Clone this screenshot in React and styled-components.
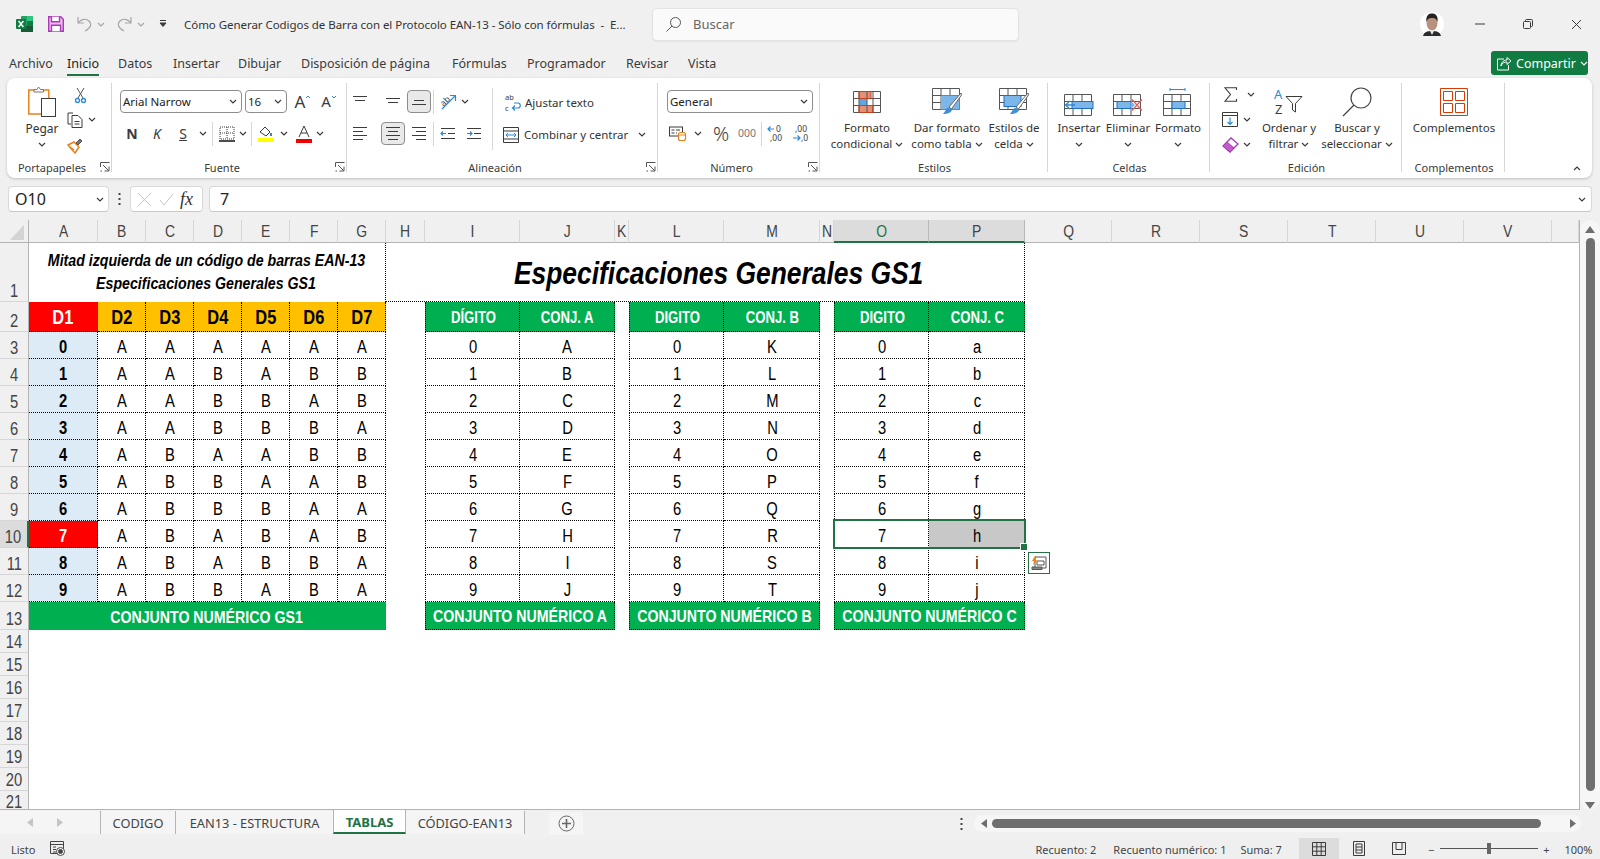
import React from "react";
import styled, { createGlobalStyle } from "styled-components";

const UI = `"Noto Sans", "Open Sans", sans-serif`;
const NARROW = `"Liberation Sans", Arial, sans-serif`;
const INK = "#3b3b3b";
const BLUE = "#2b88d8";
const ORANGE = "#e8801a";
const GREEN = "#217346";

const GlobalStyle = createGlobalStyle`
  html, body { margin: 0; padding: 0; background: #f0f0f0; overflow: hidden; }
  * { box-sizing: border-box; }
  svg { overflow: visible; }
`;

const Page = styled.div`
  width: 1600px;
  height: 859px;
  display: flex;
  flex-direction: column;
  background: #f0f0f0;
  font-family: ${UI};
  color: ${INK};
  overflow: hidden;
`;

/* Arial Narrow is not installed, so Arial widths are squeezed to match */
const Narrow = styled.span`
  display: inline-block;
  flex: none;
  white-space: nowrap;
  transform: scaleX(0.82);
  transform-origin: center;
  margin: 0 -40px;
`;

/* ---------- title bar ---------- */
const TitleBar = styled.header`
  height: 48px;
  display: flex;
  align-items: center;
  flex: none;
`;
const QuickSlot = styled.div`
  width: ${(p) => p.$w}px;
  margin-left: ${(p) => p.$ml || 0}px;
  display: flex;
  align-items: center;
  justify-content: ${(p) => p.$justify || "center"};
  flex: none;
`;
const DocTitle = styled.div`
  width: 469px;
  font-size: 11.5px;
  letter-spacing: -0.05px;
  color: #333;
  white-space: pre;
`;
const SearchBox = styled.div`
  width: 366px;
  height: 31px;
  display: flex;
  align-items: center;
  gap: 12px;
  padding-left: 13px;
  background: #fafafa;
  border-radius: 4px;
  box-shadow: 0 0 0 1px #e3e3e3, 0 1px 2px #c9c9c9;
  font-size: 13px;
  color: #666;
`;
const WinButton = styled.div`
  width: 48px;
  display: flex;
  justify-content: center;
`;

/* ---------- ribbon tabs ---------- */
const TabRow = styled.nav`
  height: 30px;
  display: flex;
  align-items: flex-start;
  padding-left: 9px;
  flex: none;
`;
const RibbonTab = styled.div`
  width: ${(p) => p.$w}px;
  height: 27px;
  font-size: 12.5px;
  line-height: 31px;
  white-space: nowrap;
  color: ${(p) => (p.$active ? "#222" : "#3b3b3b")};
  div {
    width: 32px;
    height: 2px;
    background: ${GREEN};
    margin-top: -5px;
  }
`;
const ShareButton = styled.div`
  margin-left: auto;
  margin-right: 12px;
  margin-top: 3px;
  width: 97px;
  height: 24px;
  border-radius: 3px;
  background: #107c41;
  color: #fff;
  font-size: 12.5px;
  display: flex;
  align-items: center;
  gap: 4px;
  padding-left: 5px;
`;

/* ---------- ribbon ---------- */
const Ribbon = styled.section`
  height: 100px;
  margin: 0 8px 0 7px;
  padding: 5px 0 6px;
  background: #fff;
  border-radius: 8px;
  box-shadow: 0 1px 3px #bdbdbd;
  display: flex;
  flex: none;
`;
const Group = styled.div`
  width: ${(p) => p.$w}px;
  flex: none;
  display: flex;
  flex-direction: column;
  border-right: 1px solid #d6d6d6;
`;
const GroupBody = styled.div`
  flex: 1;
  display: flex;
  padding-left: ${(p) => p.$pl || 0}px;
  min-height: 0;
`;
const GroupFoot = styled.div`
  height: 16px;
  margin-bottom: -3px;
  display: flex;
  align-items: center;
  font-size: 11px;
  color: #3b3b3b;
  span {
    flex: 1;
    text-align: center;
    white-space: nowrap;
    padding: ${(p) => (p.$launch ? "0 3px 0 0" : "0 0 0 2px")};
  }
  svg { margin-right: 1px; }
`;
const RowStack = styled.div`
  display: flex;
  flex-direction: column;
  gap: 9px;
  padding-top: 7px;
`;
const ToolRow = styled.div`
  display: flex;
  align-items: center;
  height: 23px;
`;
const Tool = styled.div`
  width: ${(p) => p.$w}px;
  height: 23px;
  margin-left: ${(p) => p.$ml || 0}px;
  flex: none;
  display: flex;
  align-items: center;
  justify-content: center;
  border-radius: 4px;
  ${(p) => p.$on && "background: #e9e9e9; border: 1px solid #8d8d8d;"}
`;
const ToolLetter = styled.span`
  font-family: ${UI};
  font-size: ${(p) => p.$size || 14}px;
  font-weight: ${(p) => p.$weight || 400};
  font-style: ${(p) => p.$italic || "normal"};
  text-decoration: ${(p) => p.$under || "none"};
  color: ${(p) => p.$color || INK};
  line-height: 1;
`;
const VRule = styled.div`
  width: 1px;
  height: ${(p) => p.$h || 24}px;
  margin: ${(p) => p.$mt || 0}px ${(p) => p.$mx ?? 2}px 0;
  background: #d6d6d6;
  flex: none;
`;
const SelectBox = styled.div`
  width: ${(p) => p.$w}px;
  height: 23px;
  margin-right: ${(p) => p.$mr || 0}px;
  border: 1px solid #8d8d8d;
  border-radius: 4px;
  background: #fff;
  display: flex;
  align-items: center;
  justify-content: space-between;
  padding: 0 4px 0 2px;
  font-size: 11.5px;
  flex: none;
  color: #222;
`;
const BigButton = styled.div`
  width: ${(p) => p.$w}px;
  margin-left: ${(p) => p.$ml || 0}px;
  flex: none;
  display: flex;
  flex-direction: column;
  align-items: center;
  font-size: 11.5px;
  line-height: 16px;
  white-space: nowrap;
  color: #333;
`;
const BigIcon = styled.div`
  height: 37px;
  display: flex;
  align-items: center;
  justify-content: center;
`;
const BigLine = styled.div`
  height: 16px;
  display: flex;
  align-items: center;
  gap: 3px;
  font-size: ${(p) => p.$size || 11.5}px;
  padding-top: ${(p) => p.$pt || 0}px;
`;
const SmallColumn = styled.div`
  width: ${(p) => p.$w}px;
  flex: none;
  display: flex;
  flex-direction: column;
  margin-top: -1px;
`;
const SmallItem = styled.div`
  height: 25px;
  display: flex;
  align-items: center;
  gap: ${(p) => p.$gap || 6}px;
  padding-left: ${(p) => p.$pl || 0}px;
`;
const TextTool = styled.div`
  height: 23px;
  display: flex;
  align-items: center;
  font-size: 11.5px;
  color: #333;
  white-space: nowrap;
  padding-left: ${(p) => p.$pl || 0}px;
  padding-top: 2px;
  gap: ${(p) => p.$gap || 4}px;
`;
const CollapseSlot = styled.div`
  flex: 1;
  display: flex;
  align-items: flex-end;
  justify-content: flex-end;
  padding: 0 11px 1px 0;
`;

/* ---------- formula bar ---------- */
const FormulaBar = styled.div`
  height: 26px;
  margin: 8px 8px 8px 8px;
  display: flex;
  flex: none;
`;
const FieldBox = styled.div`
  width: ${(p) => p.$w || "auto"};
  flex: ${(p) => (p.$grow ? 1 : "none")};
  background: #fff;
  border: 1px solid #d9d9d9;
  border-bottom-color: #c8c8c8;
  border-radius: 4px;
  display: flex;
  align-items: center;
  justify-content: space-between;
  padding: 0 ${(p) => p.$pr || 4}px 0 ${(p) => p.$pl || 6}px;
  font-size: 16px;
  color: #222;
`;
const DotsSlot = styled.div`
  width: 21px;
  flex: none;
  display: flex;
  justify-content: center;
  align-items: center;
`;
const FormulaIcons = styled(FieldBox)`
  margin-right: 6px;
  justify-content: flex-start;
  gap: 7px;
  padding: 0 0 0 6px;
`;
const FxMark = styled.span`
  font-family: "Liberation Serif", serif;
  font-style: italic;
  font-size: 18px;
  color: #333;
  margin-left: -1px;
`;

/* ---------- sheet ---------- */
const SheetArea = styled.div`
  height: 590px;
  display: flex;
  flex: none;
`;
const Grid = styled.div`
  width: 1580px;
  height: 590px;
  overflow: hidden;
  display: grid;
  grid-template-columns: 29px 69px repeat(6, 48px) 39px 95px 95px 14px 95px 96px 14px 95px 96px 87px repeat(5, 88px) 27px;
  grid-template-rows: 23px 59px 30px repeat(10, 27px) 28px repeat(7, 23px) 18px;
  background: #fff;
  border-right: 1px solid #b4b4b4;
  border-bottom: 1px solid #b4b4b4;
`;
const Corner = styled.div`
  background: #f0f0f0;
  border-right: 1px solid #b4b4b4;
  border-bottom: 1px solid #b4b4b4;
  display: flex;
  align-items: flex-end;
  justify-content: flex-end;
  padding: 0 4px 2px 0;
`;
const ColHead = styled.div`
  grid-column: ${(p) => p.$col};
  grid-row: 1;
  display: flex;
  align-items: center;
  justify-content: center;
  overflow: hidden;
  padding: 2px 0 0 1px;
  font-family: ${NARROW};
  font-size: 17px;
  color: ${(p) => (p.$hot ? GREEN : "#444")};
  background: ${(p) => (p.$on ? "#dcdcdc" : "#f0f0f0")};
  border-right: 1px solid ${(p) => (p.$on ? "#b8b8b8" : "#d6d6d6")};
  border-bottom: ${(p) => (p.$on ? `2px solid ${GREEN}` : "1px solid #b4b4b4")};
`;
const RowHead = styled.div`
  grid-column: 1;
  grid-row: ${(p) => p.$row};
  display: flex;
  align-items: flex-end;
  justify-content: center;
  overflow: hidden;
  font-family: ${NARROW};
  font-size: 18px;
  line-height: ${(p) => (p.$last ? "13px" : "19px")};
  color: #444;
  background: ${(p) => (p.$on ? "#dcdcdc" : "#f0f0f0")};
  border-right: ${(p) => (p.$on ? `2px solid ${GREEN}` : "1px solid #b4b4b4")};
  border-bottom: ${(p) => (p.$last ? "none" : "1px solid #d6d6d6")};
`;
const Cell = styled.div`
  grid-column: ${(p) => p.$col} / span ${(p) => p.$span || 1};
  grid-row: ${(p) => p.$row};
  display: flex;
  align-items: center;
  justify-content: center;
  flex-direction: column;
  min-width: 0;
  font-family: ${NARROW};
  font-size: ${(p) => p.$size || 18}px;
  font-weight: ${(p) => (p.$bold ? 700 : 400)};
  font-style: ${(p) => (p.$italic ? "italic" : "normal")};
  line-height: ${(p) => p.$lh || "normal"};
  color: ${(p) => p.$color || "#000"};
  background: ${(p) => p.$bg || "transparent"};
  padding-left: ${(p) => p.$pl ?? 1}px;
  padding-right: ${(p) => p.$pr || 0}px;
  padding-top: ${(p) => p.$pt ?? 4}px;
  padding-bottom: ${(p) => p.$pb || 0}px;
  border-right: ${(p) => (p.$noRight ? "none" : "1px dotted #000")};
  border-bottom: ${(p) => (p.$noBottom ? "none" : "1px dotted #000")};
  border-left: ${(p) => (p.$left ? "1px dotted #000" : "none")};
`;
const SelectionFrame = styled.div`
  grid-column: 16 / span 2;
  grid-row: 11;
  margin: -2px -1px -1px -1px;
  border: 2px solid ${GREEN};
  position: relative;
  z-index: 2;
`;
const FillHandle = styled.div`
  position: absolute;
  right: -3px;
  bottom: -3px;
  width: 6px;
  height: 6px;
  background: ${GREEN};
  border: 1px solid #fff;
  box-sizing: content-box;
  margin: -1px;
`;
const QuickAnalysis = styled.div`
  grid-column: 18;
  grid-row: 12;
  width: 22px;
  height: 22px;
  margin: 4px 0 0 3px;
  border: 1px solid ${GREEN};
  background: #fff;
  display: flex;
  align-items: center;
  justify-content: center;
  z-index: 2;
`;
const VScroll = styled.div`
  width: 20px;
  height: 590px;
  display: flex;
  flex-direction: column;
  align-items: center;
  background: #f6f6f6;
  border-radius: 10px;
  padding-top: 6px;
`;
const VThumb = styled.div`
  width: 9px;
  height: 553px;
  margin: 5px 0 11px;
  background: #6e6e6e;
  border-radius: 5px;
`;

/* ---------- sheet tabs ---------- */
const SheetBar = styled.div`
  height: 28px;
  display: flex;
  align-items: flex-start;
  flex: none;
`;
const SheetNav = styled.div`
  width: 100px;
  height: 23px;
  display: flex;
  align-items: center;
  padding-left: 27px;
  gap: 22px;
  flex: none;
  background: #f5f5f5;
  margin-top: 1px;
`;
const SheetTab = styled.div`
  width: ${(p) => p.$w}px;
  height: 23px;
  margin-top: ${(p) => (p.$active ? 0 : 1)}px;
  padding-top: 1px;
  flex: none;
  display: flex;
  align-items: center;
  justify-content: center;
  font-size: ${(p) => (p.$active ? 13 : 12.8)}px;
  font-weight: ${(p) => (p.$active ? 700 : 400)};
  color: ${(p) => (p.$active ? GREEN : "#444")};
  background: ${(p) => (p.$active ? "#fff" : "#f5f5f5")};
  border-left: ${(p) => (p.$noLeft ? "none" : "1px solid #b4b4b4")};
  border-right: ${(p) => (p.$right ? "1px solid #b4b4b4" : "none")};
  ${(p) => p.$active && `height: 24px; border-bottom: 2px solid ${GREEN};`}
`;
const AddSheet = styled.div`
  width: 34px;
  margin-left: 24px;
  height: 23px;
  margin-top: 2px;
  background: #f5f5f5;
  display: flex;
  align-items: center;
  justify-content: center;
  flex: none;
`;
const HScrollWrap = styled.div`
  margin-left: auto;
  margin-right: 20px;
  width: 620px;
  height: 23px;
  display: flex;
  align-items: center;
  margin-top: 2px;
`;
const HTrack = styled.div`
  flex: 1;
  height: 17px;
  margin-left: 11px;
  background: #f6f6f6;
  border-radius: 9px;
  display: flex;
  align-items: center;
  padding: 0 5px 0 7px;
  gap: 4px;
`;
const HThumb = styled.div`
  width: 549px;
  height: 9px;
  margin-right: 24px;
  background: #6e6e6e;
  border-radius: 5px;
  flex: none;
`;

/* ---------- status bar ---------- */
const StatusBar = styled.footer`
  height: 21px;
  display: flex;
  align-items: center;
  font-size: 11px;
  color: #444;
  flex: none;
  background: #efefef;
`;
const StatusText = styled.span`
  margin-left: ${(p) => p.$ml || 0}px;
  padding-top: 2px;
  white-space: nowrap;
  flex: none;
`;
const StatusIcons = styled.div`
  margin-left: ${(p) => p.$ml || 0}px;
  display: flex;
  flex: none;
`;
const ViewButton = styled.div`
  width: 40px;
  height: 21px;
  display: flex;
  align-items: center;
  justify-content: center;
  background: ${(p) => (p.$on ? "#dcdcdc" : "transparent")};
  flex: none;
`;
const ZoomTrack = styled.div`
  width: 98px;
  height: 1px;
  background: #555;
  margin: 0 5px 0 6px;
  display: flex;
  justify-content: center;
  align-items: center;
  flex: none;
  div { width: 4px; height: 11px; background: #666; }
`;

/* ---------- icons ---------- */
const Ic = ({ w, h, vb, children, ...rest }) => (
  <svg width={w} height={h} viewBox={vb || `0 0 ${w} ${h}`} fill="none" stroke={INK} strokeWidth="1" {...rest}>
    {children}
  </svg>
);
const Chevron = ({ color = INK, up }) => (
  <Ic w={8} h={5} stroke={color} strokeWidth="1.2">
    <path d={up ? "M1 4l3-3 3 3" : "M1 1l3 3 3-3"} />
  </Ic>
);
const ExcelLogo = () => (
  <svg width="17" height="16" viewBox="0 0 17 16">
    <rect x="5" y="0" width="12" height="16" rx="1" fill="#21a366" />
    <rect x="11" y="0" width="6" height="5" fill="#33c481" />
    <rect x="11" y="5" width="6" height="5" fill="#107c41" />
    <rect x="5" y="10" width="12" height="6" fill="#185c37" />
    <rect x="0" y="3" width="10" height="10" rx="1" fill="#107c41" />
    <path d="M2.6 5l4.8 6M7.4 5l-4.8 6" stroke="#fff" strokeWidth="1.5" />
  </svg>
);
const SaveIcon = () => (
  <Ic w={16} h={16} stroke="#a83bb5" strokeWidth="1.4">
    <path d="M.7.7h12l2.6 2.6v12H.7z" fill="#edb9ef" />
    <path d="M3.5.7v5h8v-5" fill="#fff" />
    <path d="M3.5 15.3v-6h9v6" fill="#fff" />
  </Ic>
);
const UndoIcon = ({ flip }) => (
  <Ic w={15} h={16} stroke="#a6a6a6" strokeWidth="1.2" style={flip ? { transform: "scaleX(-1)" } : undefined}>
    <path d="M1 1v6h6M1 7c3-4 8-5 11-2s2 7-4 10" />
  </Ic>
);
const CustomizeIcon = () => (
  <Ic w={8} h={8} strokeWidth="1">
    <path d="M1 .5h6" />
    <path d="M1 3l3 3.5L7 3z" fill={INK} />
  </Ic>
);
const SearchIcon = ({ size = 15, color = "#555", strokeWidth = 1 }) => (
  <Ic w={size} h={size} vb="0 0 15 15" stroke={color} strokeWidth={strokeWidth}>
    <circle cx="9.5" cy="5.5" r="5" />
    <path d="M6 9l-5.5 5.5" />
  </Ic>
);
const Avatar = () => (
  <svg width="24" height="24" viewBox="0 0 24 24">
    <circle cx="12" cy="12" r="12" fill="#fff" />
    <path d="M3 24c1-4 4-5 9-5s8 1 9 5z" fill="#2a2a2e" />
    <path d="M10 19l2 4 2-4z" fill="#e8e8e8" />
    <ellipse cx="12" cy="11" rx="5.500" ry="7.500" fill="#b8917f" />
    <path d="M6.500 10c-1-6 2-8.500 5.500-8.500s6.500 2.500 5.500 8.500c-1-3-2-4-5.500-4s-4.500 1-5.500 4z" fill="#26211f" />
  </svg>
);
const ShareIcon = () => (
  <Ic w={16} h={15} stroke="#fff">
    <path d="M8 3H1.5v11h11V9" />
    <path d="M5 10c0-4 3-6 6-6V1.5L15 5l-4 3.500V6c-3 0-5 1-6 4z" />
  </Ic>
);
const PasteIcon = () => (
  <svg width="28" height="31" viewBox="0 0 28 31" fill="none">
    <rect x=".8" y="4" width="20" height="24" fill="#fff" stroke={ORANGE} strokeWidth="1.5" />
    <path d="M6 6V3.500h3L10.500 1l2 2.500h3V6z" fill="#fff" stroke="#777" />
    <rect x="13.500" y="12.500" width="14" height="18" fill="#fff" stroke={INK} />
  </svg>
);
const CutIcon = () => (
  <Ic w={11} h={16} stroke="#555">
    <path d="M2 1l6 10M9 1L3 11" />
    <circle cx="2.500" cy="13.500" r="2" stroke={BLUE} strokeWidth="1.3" />
    <circle cx="8.500" cy="13.500" r="2" stroke={BLUE} strokeWidth="1.3" />
  </Ic>
);
const CopyIcon = () => (
  <Ic w={16} h={16}>
    <path d="M6 1H1v11h3" />
    <path d="M5 3.500h6l4 4v8H5z" fill="#fff" />
    <path d="M7.500 9.500h5M7.500 12h5" />
  </Ic>
);
const PainterIcon = () => (
  <svg width="17" height="16" viewBox="0 0 17 16" fill="none">
    <path d="M1 8l6-3 5 5-4 6z" fill="#fff" stroke={ORANGE} strokeWidth="1.5" />
    <path d="M3 10l4 3" stroke={ORANGE} strokeWidth="1.3" />
    <path d="M9 6l4-4 2 2-4 4z" fill="#777" stroke="#555" />
  </svg>
);
const LinesIcon = ({ widths, top = 0 }) => (
  <Ic w={16} h={14}>
    {widths.map(([x, w], i) => (
      <path key={i} d={`M${x} ${top + i * 4 + 1.5}h${w}`} />
    ))}
  </Ic>
);
const IndentIcon = ({ out }) => (
  <Ic w={16} h={13}>
    <path d="M1 1.500h14M8 6.500h7M1 11.500h14" />
    <path d={out ? "M6 6.500H1M3 4.500l-2 2 2 2" : "M1 6.500h5M4 4.500l2 2-2 2"} stroke={BLUE} strokeWidth="1.2" />
  </Ic>
);
const OrientIcon = () => (
  <svg width="17" height="17" viewBox="0 0 17 17" fill="none">
    <text x="1" y="10" fontFamily="Noto Sans" fontSize="8.500" fill={INK} transform="rotate(-45 5 8) translate(-1 1)">ab</text>
    <path d="M2 16L15 3M10 2.500h5.500V8" stroke={BLUE} strokeWidth="1.2" />
  </svg>
);
const BordersIcon = () => (
  <Ic w={16} h={16} strokeDasharray="1 1">
    <path d="M1 1h14v12H1zM8 1v12M1 7h14" />
    <path d="M0 15h16" stroke="#000" strokeWidth="1.400" strokeDasharray="none" />
  </Ic>
);
const FillIcon = () => (
  <svg width="16" height="17" viewBox="0 0 16 17" fill="none">
    <path d="M2 7l5-5 5 5-4 4z" fill="#fff" stroke={INK} />
    <path d="M13 8v3" stroke={BLUE} strokeWidth="2" />
    <rect x="0" y="13" width="16" height="4" fill="#ffff00" />
  </svg>
);
const FontColorIcon = () => (
  <svg width="16" height="18" viewBox="0 0 16 18" fill="none">
    <path d="M3 12L8 1l5 11M5 8h6" stroke={INK} />
    <rect x="0" y="14" width="16" height="4" fill="#f00000" />
  </svg>
);
const WrapIcon = () => (
  <svg width="16" height="17" viewBox="0 0 16 17" fill="none">
    <text fontFamily="Noto Sans" fontSize="7.5" fill={INK}>
      <tspan x="0" y="6">ab</tspan>
      <tspan x="0" y="16.500">c</tspan>
    </text>
    <path d="M8 14h5c3 0 3-5 0-5H9M10 11.500l-2.500 2.500 2.500 2.500" stroke={BLUE} strokeWidth="1.2" />
  </svg>
);
const MergeIcon = () => (
  <Ic w={16} h={16} stroke={BLUE}>
    <path d="M.5.500h15v15H.5zM.5 4h15M.5 12h15M.5 4v8" stroke={INK} />
    <path d="M3 8h10M5 6L3 8l2 2M11 6l2 2-2 2" />
  </Ic>
);
const CurrencyIcon = () => (
  <svg width="18" height="15" viewBox="0 0 18 15" fill="none">
    <rect x=".5" y="1" width="13" height="9" fill="#fff" stroke={INK} />
    <path d="M2.500 4h3M2.500 7h3M7 4h4M7 7h1" stroke={INK} />
    <rect x="9.500" y="6.500" width="7" height="8" rx="2" fill="#fff" stroke={ORANGE} strokeWidth="1.200" />
    <path d="M9.500 9h7" stroke={ORANGE} />
  </svg>
);
const DecimalIcon = ({ more }) => (
  <svg width="16" height="17" viewBox="0 0 16 17" fill="none" fontFamily="Noto Sans" fontSize="8.500">
    {more ? (
      <>
        <path d="M7 4H1M3.500 1.500L1 4l2.500 2.500" stroke={BLUE} strokeWidth="1.2" />
        <text fill={INK}>
          <tspan x="9" y="7">0</tspan>
          <tspan x="3" y="16">,00</tspan>
        </text>
      </>
    ) : (
      <>
        <path d="M1 13h7M5.500 10.500L8 13l-2.500 2.500" stroke={BLUE} strokeWidth="1.200" />
        <text fill={INK}>
          <tspan x="3" y="7">,00</tspan>
          <tspan x="9" y="16">,0</tspan>
        </text>
      </>
    )}
  </svg>
);
const CondFormatIcon = () => (
  <svg width="28" height="22" viewBox="0 0 28 22" fill="none">
    <rect x="6" y="0.500" width="12" height="7" fill="#e59074" />
    <rect x="6" y="7.500" width="8" height="7" fill="#5ea6e6" />
    <rect x="6" y="14.500" width="14" height="7" fill="#e59074" />
    <path d="M.5.500h27v21H.5zM.5 7.500h27M.5 14.500h27M6 .5v21M14 .5v21M20 .5v21" stroke="#555" />
    <path d="M6 .5h12v7H6zM6 14.500h14v7H6z" stroke="#c8401c" />
  </svg>
);
const TableFormatIcon = ({ cellStyle }) => (
  <svg width="30" height="27" viewBox="0 0 30 27" fill="none">
    <path d="M.5.500h27v21H.5zM.5 7.500h27M.5 14.500h27M9 .5v21M18 .5v21" stroke="#555" />
    {cellStyle ? (
      <rect x="5" y="7.500" width="17" height="11" fill="#7db7ea" stroke="#1f70c1" />
    ) : (
      <rect x="9" y="7.500" width="18.500" height="14" fill="#7db7ea" />
    )}
    <path d="M29 5L17 19l2.500 2L29.500 7z" fill="#fff" stroke="#666" />
    <path d="M16 19.500l4 2.500c-1 3-5 4-9 4 2-2 3-5 5-6.500z" fill="#3f8fd6" />
  </svg>
);
const CellsIcon = ({ kind }) => (
  <svg width="30" height="28" viewBox="0 0 30 28" fill="none">
    {kind === "format" && <path d="M7 1.500h15M7 0v3M22 0v3" stroke={BLUE} />}
    <path d="M.5 6.500h27v21H.5zM.5 13.500h27M.5 20.500h27M9 6.500v21M18 6.500v21" stroke="#555" />
    {kind === "insert" && (
      <>
        <rect x="8" y="13.500" width="21" height="7" fill="#7db7ea" stroke="#1f70c1" />
        <path d="M11 17H2M6 13l-4.500 4L6 21" stroke={BLUE} strokeWidth="1.300" fill="#fff" />
      </>
    )}
    {kind === "delete" && (
      <>
        <rect x="4" y="13.500" width="14" height="7" fill="#7db7ea" stroke="#1f70c1" />
        <path d="M18 13l4 4-4 4" fill="#7db7ea" />
        <path d="M19 11.500l10 11M29 11.500l-10 11" stroke="#e8605a" strokeWidth="1.300" />
      </>
    )}
    {kind === "format" && <rect x="9" y="13.500" width="13" height="7" fill="#7db7ea" stroke="#1f70c1" />}
  </svg>
);
const SumIcon = () => (
  <Ic w={13} h={15} strokeWidth="1.100">
    <path d="M12.500 3V.8H1l5.500 6.700L1 14.200h11.500V12" />
  </Ic>
);
const FillDownIcon = () => (
  <Ic w={16} h={15}>
    <path d="M.5.500h15v14H.5zM.5 3.500h15" />
    <path d="M8 5.500v7M5.500 10L8 12.500 10.500 10" stroke={BLUE} strokeWidth="1.200" />
  </Ic>
);
const EraserIcon = () => (
  <svg width="17" height="16" viewBox="0 0 17 16" fill="none">
    <path d="M1 9l8-8 7 6-8 8z" fill="#fff" stroke="#a83bb5" strokeWidth="1.300" />
    <path d="M1 9l4-4 7 6-4 4z" fill="#c05bc9" stroke="#a83bb5" />
  </svg>
);
const SortFilterIcon = () => (
  <svg width="30" height="27" viewBox="0 0 30 27" fill="none" fontFamily="Noto Sans" fontSize="13">
    <text fill={BLUE} x="0" y="11">A</text>
    <text fill={INK} x="1" y="26">Z</text>
    <path d="M12 8.500h16l-6.500 7v8.500l-3-2v-6.500z" stroke={INK} fill="#fff" />
  </svg>
);
const AddinsIcon = () => (
  <Ic w={28} h={28} stroke="#d83b01">
    <path d="M.5.500h27v27H.5z" />
    <path d="M3.500 3.500h9v9h-9zM15.500 3.500h9v9h-9zM3.500 15.500h9v9h-9zM15.500 15.500h9v9h-9z" />
  </Ic>
);
const Launcher = () => (
  <Ic w={10} h={10} stroke="#555">
    <path d="M.5 5V.5H9.500" />
    <path d="M3 3l5.500 5.500M4.500 9H9V4.500" />
    <path d="M.5 9h1.500" />
  </Ic>
);
const CrossIcon = ({ size = 15, color = "#c4c4c4" }) => (
  <Ic w={size} h={size} stroke={color}>
    <path d={`M1 1l${size - 2} ${size - 2}M${size - 1} 1L1 ${size - 1}`} />
  </Ic>
);
const CheckIcon = () => (
  <Ic w={15} h={13} stroke="#c4c4c4">
    <path d="M1 7l4 5 9-11" />
  </Ic>
);
const QuickIcon = () => (
  <svg width="16" height="14" viewBox="0 0 16 14" fill="none">
    <path d="M4 1h11v11H4z" fill="#fff" stroke="#555" />
    <path d="M1 11h10v2.500H1z" fill="#888" stroke="#555" />
    <path d="M6 5h7v4H6z" stroke="#555" />
    <path d="M4 0L1 5h2L2 9l4-5H4l1.500-4z" fill={ORANGE} />
  </svg>
);
const TinyArrow = ({ dir, color = "#6e6e6e", size = 7 }) => (
  <svg width={size} height={size + 2} viewBox="0 0 7 9" style={{ flex: "none" }}>
    <path d={dir === "left" ? "M6 0v9L0 4.500z" : "M1 0v9l6-4.500z"} fill={color} />
  </svg>
);
const VArrow = ({ up }) => (
  <svg width="10" height="7" viewBox="0 0 10 7" style={{ flex: "none" }}>
    <path d={up ? "M5 0l5 7H0z" : "M0 0h10L5 7z"} fill="#6e6e6e" />
  </svg>
);
const DotsIcon = () => (
  <svg width="3" height="12" viewBox="0 0 3 12" style={{ flex: "none" }}>
    <rect x=".5" y="0" width="2" height="2" fill="#444" />
    <rect x=".5" y="5" width="2" height="2" fill="#444" />
    <rect x=".5" y="10" width="2" height="2" fill="#444" />
  </svg>
);
const AddIcon = () => (
  <Ic w={17} h={17} stroke="#666">
    <circle cx="8.500" cy="8.500" r="7.500" />
    <path d="M8.500 4v9M4 8.500h9" strokeWidth="1.600" />
  </Ic>
);
const MacroIcon = () => (
  <Ic w={15} h={15} stroke="#444">
    <path d="M.5.500h13v12H.5zM.5 3.500h13M3 6h3M3 8.500h3M3 11h3" />
    <circle cx="10.500" cy="10.500" r="4" fill="#fff" />
    <circle cx="10.500" cy="10.500" r="2" fill="#444" />
  </Ic>
);
const ViewNormal = () => (
  <Ic w={14} h={14}>
    <path d="M.5.500h13v13H.5zM.5 4.800h13M.5 9.200h13M4.800.5v13M9.200.5v13" />
  </Ic>
);
const ViewPage = () => (
  <Ic w={12} h={15}>
    <path d="M.5.500h11v14H.5z" />
    <path d="M3 3h6v9H3zM3 6h6M3 9h6" />
  </Ic>
);
const ViewBreak = () => (
  <Ic w={14} h={13}>
    <path d="M.5.500h13v12H.5z" />
    <path d="M4 .5v7h6V.5" />
  </Ic>
);
const TriangleCorner = () => (
  <svg width="14" height="15" viewBox="0 0 14 15">
    <path d="M14 0v15H0z" fill="#d4d4d4" />
  </svg>
);

/* ---------- ribbon groups ---------- */
const Foot = ({ label, launcher }) => (
  <GroupFoot $launch={launcher}>
    <span>{label}</span>
    {launcher && <Launcher />}
  </GroupFoot>
);
const Arrow = ({ w = 11 }) => (
  <Tool $w={w}>
    <Chevron />
  </Tool>
);

const Clipboard = () => (
  <Group $w={105}>
    <GroupBody $pl={16}>
      <BigButton $w={38}>
        <BigIcon>
          <PasteIcon />
        </BigIcon>
        <BigLine $size={12} $pt={2}>Pegar</BigLine>
        <BigLine>
          <Chevron />
        </BigLine>
      </BigButton>
      <SmallColumn $w={42}>
        <SmallItem $pl={14}>
          <CutIcon />
        </SmallItem>
        <SmallItem $pl={6} $gap={5}>
          <CopyIcon />
          <Chevron />
        </SmallItem>
        <SmallItem $pl={6}>
          <PainterIcon />
        </SmallItem>
      </SmallColumn>
    </GroupBody>
    <Foot label="Portapapeles" launcher />
  </Group>
);

const Font = () => (
  <Group $w={235}>
    <GroupBody $pl={8}>
      <RowStack>
        <ToolRow>
          <SelectBox $w={122} $mr={3}>
            <span>Arial Narrow</span>
            <Chevron />
          </SelectBox>
          <SelectBox $w={42} $mr={6}>
            <span>16</span>
            <Chevron />
          </SelectBox>
          <Tool $w={20}>
            <ToolLetter $size={17}>A</ToolLetter>
            <svg width="6" height="8" viewBox="0 0 6 8" style={{ marginBottom: 8 }}>
              <path d="M1 4l2-2 2 2" stroke={BLUE} fill="none" />
            </svg>
          </Tool>
          <Tool $w={20} $ml={6}>
            <ToolLetter $size={15}>A</ToolLetter>
            <svg width="6" height="8" viewBox="0 0 6 8" style={{ marginBottom: 8 }}>
              <path d="M1 2l2 2 2-2" stroke={BLUE} fill="none" />
            </svg>
          </Tool>
        </ToolRow>
        <ToolRow>
          <Tool $w={24}>
            <ToolLetter $weight={700} $size={14}>N</ToolLetter>
          </Tool>
          <Tool $w={26}>
            <ToolLetter $italic="italic" $size={14}>K</ToolLetter>
          </Tool>
          <Tool $w={26}>
            <ToolLetter $under="underline" $size={14}>S</ToolLetter>
          </Tool>
          <Arrow w={13} />
          <VRule $mx={3} />
          <Tool $w={22}>
            <BordersIcon />
          </Tool>
          <Arrow w={10} />
          <VRule $mx={3} />
          <Tool $w={22}>
            <FillIcon />
          </Tool>
          <Arrow w={14} />
          <Tool $w={20} $ml={3}>
            <FontColorIcon />
          </Tool>
          <Arrow w={12} />
        </ToolRow>
      </RowStack>
    </GroupBody>
    <Foot label="Fuente" launcher />
  </Group>
);

const Alignment = () => (
  <Group $w={311}>
    <GroupBody $pl={1}>
      <RowStack>
        <ToolRow>
          <Tool $w={24}>
            <LinesIcon widths={[[1, 14], [3, 10]]} />
          </Tool>
          <Tool $w={24} $ml={9}>
            <LinesIcon widths={[[1, 14], [3, 10]]} top={2} />
          </Tool>
          <Tool $w={24} $ml={2} $on>
            <LinesIcon widths={[[3, 10], [1, 14]]} top={4} />
          </Tool>
          <VRule $mx={2} />
          <Tool $w={24}>
            <OrientIcon />
          </Tool>
          <Arrow w={10} />
        </ToolRow>
        <ToolRow>
          <Tool $w={24}>
            <LinesIcon widths={[[1, 14], [1, 10], [1, 14], [1, 10]]} top={-1} />
          </Tool>
          <Tool $w={24} $ml={9} $on>
            <LinesIcon widths={[[1, 14], [3, 10], [1, 14], [3, 10]]} top={-1} />
          </Tool>
          <Tool $w={24} $ml={2}>
            <LinesIcon widths={[[1, 14], [5, 10], [1, 14], [5, 10]]} top={-1} />
          </Tool>
          <VRule $mx={2} />
          <Tool $w={24}>
            <IndentIcon out />
          </Tool>
          <Tool $w={24} $ml={2}>
            <IndentIcon />
          </Tool>
        </ToolRow>
      </RowStack>
      <VRule $mx={6} $h={62} $mt={5} />
      <RowStack>
        <TextTool $pl={6} $gap={4}>
          <WrapIcon />
          <span>Ajustar texto</span>
        </TextTool>
        <TextTool $pl={4} $gap={5}>
          <MergeIcon />
          <span>Combinar y centrar</span>
          <span />
          <Chevron />
        </TextTool>
      </RowStack>
    </GroupBody>
    <Foot label="Alineación" launcher />
  </Group>
);

const NumberGroup = () => (
  <Group $w={162}>
    <GroupBody $pl={9}>
      <RowStack>
        <SelectBox $w={146}>
          <span>General</span>
          <Chevron />
        </SelectBox>
        <ToolRow>
          <Tool $w={22}>
            <CurrencyIcon />
          </Tool>
          <Arrow w={17} />
          <Tool $w={28} $ml={1}>
            <ToolLetter $size={20} $weight={300}>%</ToolLetter>
          </Tool>
          <Tool $w={22} $ml={1}>
            <ToolLetter $size={10.5} $color="#777">000</ToolLetter>
          </Tool>
          <VRule $mx={3} />
          <Tool $w={20}>
            <DecimalIcon more />
          </Tool>
          <Tool $w={20} $ml={5}>
            <DecimalIcon />
          </Tool>
        </ToolRow>
      </RowStack>
    </GroupBody>
    <Foot label="Número" launcher />
  </Group>
);

const BigAction = ({ w, ml, icon, lines }) => (
  <BigButton $w={w} $ml={ml}>
    <BigIcon>{icon}</BigIcon>
    <BigLine>{lines[0]}</BigLine>
    <BigLine>
      {lines[1]}
      <Chevron />
    </BigLine>
  </BigButton>
);

const Styles = () => (
  <Group $w={228}>
    <GroupBody $pl={11}>
      <BigAction w={72} icon={<CondFormatIcon />} lines={["Formato", "condicional"]} />
      <BigAction w={78} ml={5} icon={<TableFormatIcon />} lines={["Dar formato", "como tabla"]} />
      <BigAction w={56} icon={<TableFormatIcon cellStyle />} lines={["Estilos de", "celda"]} />
    </GroupBody>
    <Foot label="Estilos" />
  </Group>
);

const Cells = () => (
  <Group $w={162}>
    <GroupBody $pl={7}>
      <BigAction w={48} icon={<CellsIcon kind="insert" />} lines={["Insertar", ""]} />
      <BigAction w={50} icon={<CellsIcon kind="delete" />} lines={["Eliminar", ""]} />
      <BigAction w={50} icon={<CellsIcon kind="format" />} lines={["Formato", ""]} />
    </GroupBody>
    <Foot label="Celdas" />
  </Group>
);

const Editing = () => (
  <Group $w={192}>
    <GroupBody $pl={12}>
      <SmallColumn $w={36}>
        <SmallItem $pl={2} $gap={10}>
          <SumIcon />
          <Chevron />
        </SmallItem>
        <SmallItem $gap={5}>
          <FillDownIcon />
          <Chevron />
        </SmallItem>
        <SmallItem $gap={4}>
          <EraserIcon />
          <Chevron />
        </SmallItem>
      </SmallColumn>
      <BigAction w={62} icon={<SortFilterIcon />} lines={["Ordenar y", "filtrar"]} />
      <BigAction
        w={74}
        icon={<SearchIcon size={30} color="#444" strokeWidth={0.6} />}
        lines={["Buscar y", "seleccionar"]}
      />
    </GroupBody>
    <Foot label="Edición" />
  </Group>
);

const Addins = () => (
  <Group $w={103}>
    <GroupBody $pl={1}>
      <BigButton $w={102}>
        <BigIcon>
          <AddinsIcon />
        </BigIcon>
        <BigLine>Complementos</BigLine>
      </BigButton>
    </GroupBody>
    <Foot label="Complementos" />
  </Group>
);

/* ---------- sheet data ---------- */
const COLS = ["A", "B", "C", "D", "E", "F", "G", "H", "I", "J", "K", "L", "M", "N", "O", "P", "Q", "R", "S", "T", "U", "V"];
const PATTERNS = ["AAAAAA", "AABABB", "AABBAB", "AABBBA", "ABAABB", "ABBAAB", "ABBBAA", "ABABAB", "ABABBA", "ABBABA"];
const SETS = [
  { col: 10, head: "DÍGITO", name: "A", letters: "ABCDEFGHIJ" },
  { col: 13, head: "DIGITO", name: "B", letters: "KLMNOPQRST" },
  { col: 16, head: "DIGITO", name: "C", letters: "abcdefghij" },
];
const RIBBON_TABS = [
  ["Archivo", 58],
  ["Inicio", 51, true],
  ["Datos", 55],
  ["Insertar", 65],
  ["Dibujar", 63],
  ["Disposición de página", 151],
  ["Fórmulas", 75],
  ["Programador", 99],
  ["Revisar", 62],
  ["Vista", 50],
];
const GREEN_BG = "#00b050";

const SheetCell = ({ children, ...rest }) => (
  <Cell {...rest}>
    <Narrow>{children}</Narrow>
  </Cell>
);

const LeftTable = () => (
  <>
    <Cell $col={2} $span={7} $row={2} $bold $italic $size={17.3} $lh="22.6px" $noBottom $pt={0} $pb={2} $pl={0} $pr={2}>
      <Narrow>Mitad izquierda de un código de barras EAN-13</Narrow>
      <Narrow>Especificaciones Generales GS1</Narrow>
    </Cell>
    <SheetCell $col={2} $row={3} $bg="#ff0000" $color="#fff" $bold $size={20} $noRight $pt={2} $pl={0} $pr={1}>
      D1
    </SheetCell>
    {[2, 3, 4, 5, 6, 7].map((n, i) => (
      <SheetCell key={n} $col={3 + i} $row={3} $bg="#ffc000" $bold $size={20} $pt={2} $pl={0}>
        D{n}
      </SheetCell>
    ))}
    {PATTERNS.map((pat, r) => (
      <React.Fragment key={r}>
        <SheetCell $col={2} $row={4 + r} $bold $bg={r === 7 ? "#ff0000" : "#ddebf7"} $color={r === 7 ? "#fff" : "#000"}>
          {r}
        </SheetCell>
        {pat.split("").map((ch, i) => (
          <SheetCell key={i} $col={3 + i} $row={4 + r}>
            {ch}
          </SheetCell>
        ))}
      </React.Fragment>
    ))}
    <SheetCell $col={2} $span={7} $row={14} $bg={GREEN_BG} $color="#fff" $bold $size={17.3} $noRight $noBottom $pt={2} $pl={0} $pr={2}>
      CONJUNTO NUMÉRICO GS1
    </SheetCell>
  </>
);

const SetTable = ({ col, head, name, letters }) => (
  <>
    <SheetCell $col={col} $row={3} $bg={GREEN_BG} $color="#fff" $bold $size={16} $left $pt={2}>
      {head}
    </SheetCell>
    <SheetCell $col={col + 1} $row={3} $bg={GREEN_BG} $color="#fff" $bold $size={16} $pt={2}>
      CONJ. {name}
    </SheetCell>
    {letters.split("").map((ch, r) => (
      <React.Fragment key={ch}>
        <SheetCell $col={col} $row={4 + r} $left>
          {r}
        </SheetCell>
        <SheetCell $col={col + 1} $row={4 + r} $bg={name === "C" && r === 7 ? "#c8c8c8" : "transparent"}>
          {ch}
        </SheetCell>
      </React.Fragment>
    ))}
    <SheetCell $col={col} $span={2} $row={14} $bg={GREEN_BG} $color="#fff" $bold $size={17.3} $left $pt={2} $pl={0}>
      CONJUNTO NUMÉRICO {name}
    </SheetCell>
  </>
);

const Sheet = () => (
  <SheetArea>
    <Grid>
      <Corner>
        <TriangleCorner />
      </Corner>
      {COLS.map((c, i) => (
        <ColHead key={c} $col={i + 2} $on={c === "O" || c === "P"} $hot={c === "O"}>
          <Narrow>{c}</Narrow>
        </ColHead>
      ))}
      <ColHead $col={24} />
      {Array.from({ length: 21 }, (_, i) => (
        <RowHead key={i} $row={i + 2} $on={i === 9} $last={i === 20}>
          <Narrow>{i + 1}</Narrow>
        </RowHead>
      ))}
      <LeftTable />
      <SheetCell $col={9} $span={9} $row={2} $bold $italic $size={32.2} $pl={28} $pt={2}>
        Especificaciones Generales GS1
      </SheetCell>
      {SETS.map((s) => (
        <SetTable key={s.name} {...s} />
      ))}
      <SelectionFrame>
        <FillHandle />
      </SelectionFrame>
      <QuickAnalysis>
        <QuickIcon />
      </QuickAnalysis>
    </Grid>
    <VScroll>
      <VArrow up />
      <VThumb />
      <VArrow />
    </VScroll>
  </SheetArea>
);

export default function App() {
  return (
    <Page>
      <GlobalStyle />
      <TitleBar>
        <QuickSlot $w={17} $ml={16}>
          <ExcelLogo />
        </QuickSlot>
        <QuickSlot $w={16} $ml={15}>
          <SaveIcon />
        </QuickSlot>
        <QuickSlot $w={15} $ml={13}>
          <UndoIcon />
        </QuickSlot>
        <QuickSlot $w={12} $ml={3}>
          <Chevron color="#a6a6a6" />
        </QuickSlot>
        <QuickSlot $w={15} $ml={10}>
          <UndoIcon flip />
        </QuickSlot>
        <QuickSlot $w={12} $ml={3}>
          <Chevron color="#a6a6a6" />
        </QuickSlot>
        <QuickSlot $w={12} $ml={10}>
          <CustomizeIcon />
        </QuickSlot>
        <QuickSlot $w={469} $ml={15} $justify="flex-start">
          <DocTitle>Cómo Generar Codigos de Barra con el Protocolo EAN-13 - Sólo con fórmulas  -  E...</DocTitle>
        </QuickSlot>
        <SearchBox>
          <SearchIcon />
          <span>Buscar</span>
        </SearchBox>
        <QuickSlot $w={24} $ml={402}>
          <Avatar />
        </QuickSlot>
        <QuickSlot $w={144} $ml={12}>
          <WinButton>
            <Ic w={10} h={2}>
              <path d="M0 1h10" />
            </Ic>
          </WinButton>
          <WinButton>
            <Ic w={10} h={10}>
              <rect x=".5" y="2.500" width="7" height="7" rx="1" />
              <path d="M2.500 2.500V1.500a1 1 0 011-1h5a1 1 0 011 1v5a1 1 0 01-1 1H7.500" />
            </Ic>
          </WinButton>
          <WinButton>
            <CrossIcon size={11} color={INK} />
          </WinButton>
        </QuickSlot>
      </TitleBar>

      <TabRow>
        {RIBBON_TABS.map(([label, w, active]) => (
          <RibbonTab key={label} $w={w} $active={active}>
            {label}
            {active && <div />}
          </RibbonTab>
        ))}
        <ShareButton>
          <ShareIcon />
          <span>Compartir</span>
          <Chevron color="#fff" />
        </ShareButton>
      </TabRow>

      <Ribbon>
        <Clipboard />
        <Font />
        <Alignment />
        <NumberGroup />
        <Styles />
        <Cells />
        <Editing />
        <Addins />
        <CollapseSlot>
          <Chevron up />
        </CollapseSlot>
      </Ribbon>

      <FormulaBar>
        <FieldBox $w="101px">
          <span>O10</span>
          <Chevron />
        </FieldBox>
        <DotsSlot>
          <DotsIcon />
        </DotsSlot>
        <FormulaIcons $w="73px">
          <CrossIcon />
          <CheckIcon />
          <FxMark>fx</FxMark>
        </FormulaIcons>
        <FieldBox $grow $pl={10} $pr={5}>
          <span>7</span>
          <Chevron />
        </FieldBox>
      </FormulaBar>

      <Sheet />

      <SheetBar>
        <SheetNav>
          <TinyArrow dir="left" color="#c4c4c4" />
          <TinyArrow dir="right" color="#c4c4c4" />
        </SheetNav>
        <SheetTab $w={75}>CODIGO</SheetTab>
        <SheetTab $w={158}>EAN13 - ESTRUCTURA</SheetTab>
        <SheetTab $w={73} $active $right>TABLAS</SheetTab>
        <SheetTab $w={119} $noLeft $right>CÓDIGO-EAN13</SheetTab>
        <AddSheet>
          <AddIcon />
        </AddSheet>
        <HScrollWrap>
          <DotsIcon />
          <HTrack>
            <TinyArrow dir="left" />
            <HThumb />
            <TinyArrow dir="right" />
          </HTrack>
        </HScrollWrap>
      </SheetBar>

      <StatusBar>
        <StatusText $ml={11}>Listo</StatusText>
        <StatusIcons $ml={14}>
          <MacroIcon />
        </StatusIcons>
        <StatusText $ml={971}>Recuento: 2</StatusText>
        <StatusText $ml={17}>Recuento numérico: 1</StatusText>
        <StatusText $ml={14}>Suma: 7</StatusText>
        <StatusIcons $ml={17}>
          <ViewButton $on>
            <ViewNormal />
          </ViewButton>
          <ViewButton>
            <ViewPage />
          </ViewButton>
          <ViewButton>
            <ViewBreak />
          </ViewButton>
        </StatusIcons>
        <StatusText $ml={9}>−</StatusText>
        <ZoomTrack>
          <div />
        </ZoomTrack>
        <StatusText>+</StatusText>
        <StatusText $ml={15}>100%</StatusText>
      </StatusBar>
    </Page>
  );
}
